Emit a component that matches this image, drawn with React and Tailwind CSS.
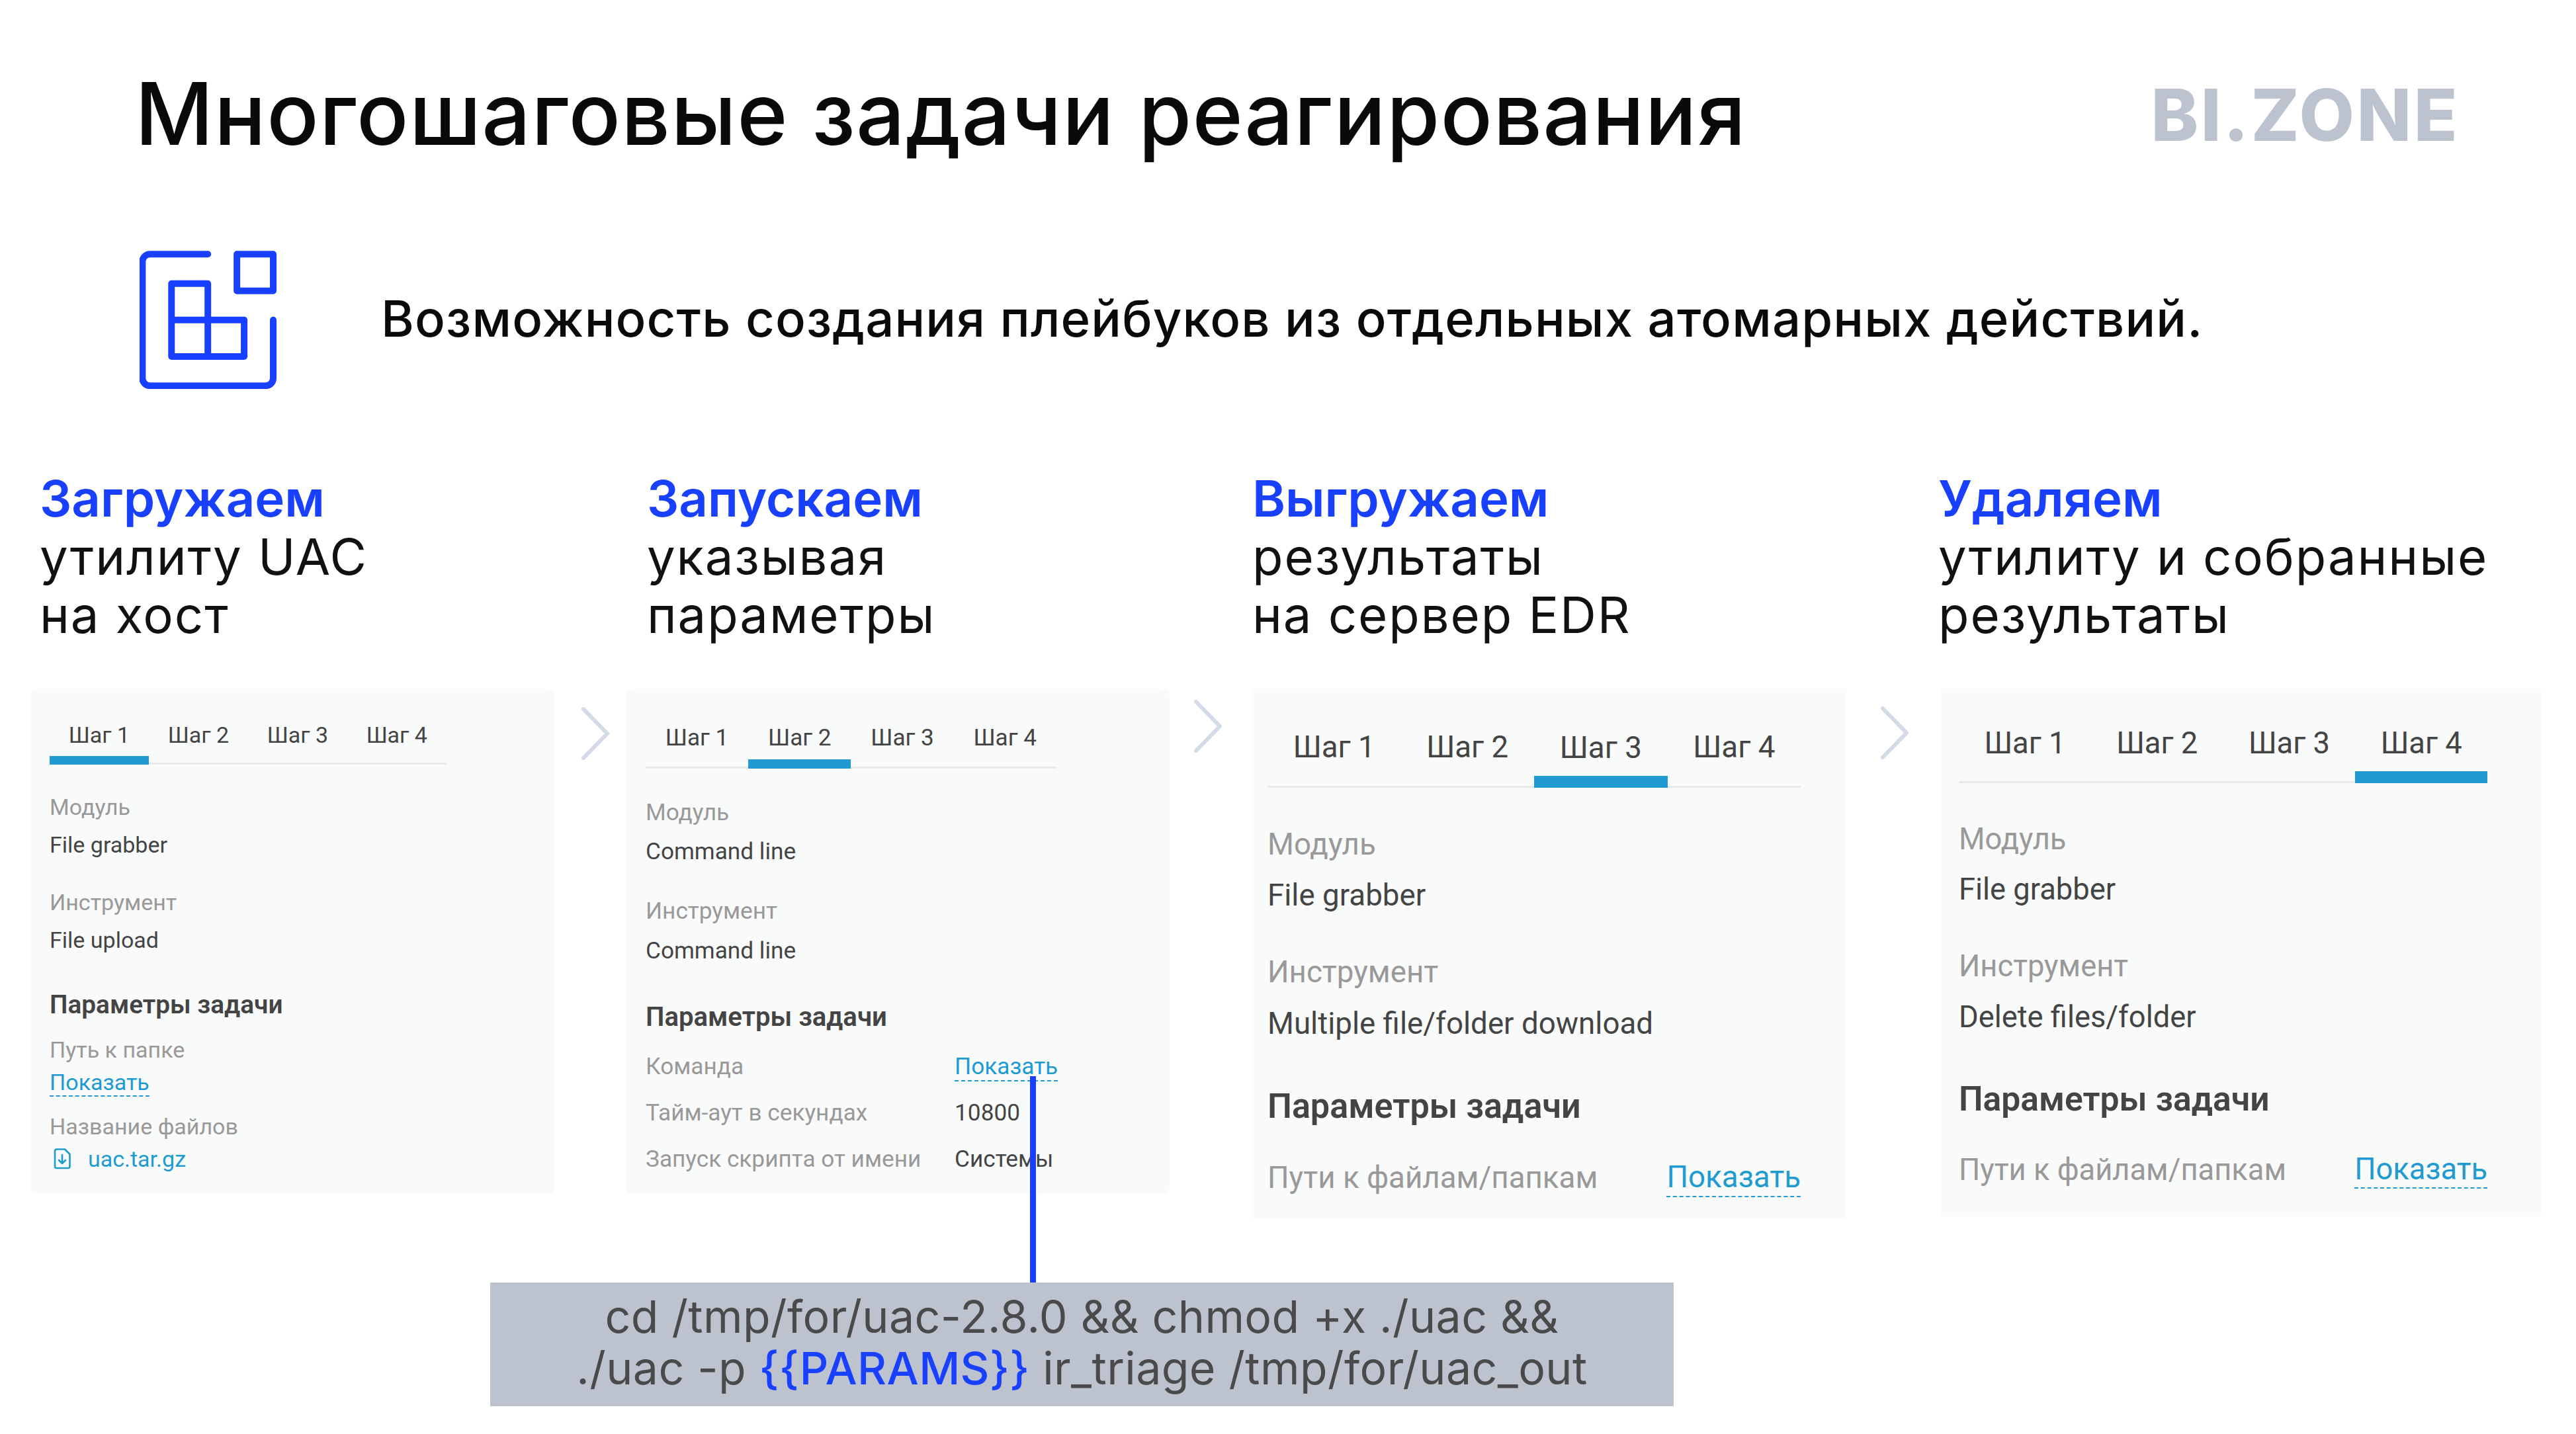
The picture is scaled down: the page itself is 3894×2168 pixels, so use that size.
import { Fragment } from 'react';

const tabs = ['Шаг 1', 'Шаг 2', 'Шаг 3', 'Шаг 4'];

function Chevron({ className }) {
  return (
    <svg viewBox="0 0 42 80" className={`w-[42px] h-[80px] shrink-0 ${className}`} fill="none" stroke="#d5dae8" strokeWidth="6" strokeLinecap="round" strokeLinejoin="round">
      <polyline points="3,3 39,40 3,77" />
    </svg>
  );
}

function BlocksIcon() {
  return (
    <svg viewBox="185 118 622 627" className="w-[207px] h-[209px] shrink-0" fill="none" stroke="#1a40ff" strokeWidth="30" strokeLinecap="round" strokeLinejoin="round">
      <path d="M495 133H232a34 34 0 0 0-34 34V697a34 34 0 0 0 34 34H758a34 34 0 0 0 34-34V432" />
      <rect x="627" y="133" width="165" height="167" />
      <path d="M330 267H495V432H660V598H330ZM330 432H495M495 432V598" />
    </svg>
  );
}

function FileIcon() {
  return (
    <svg viewBox="0 0 26 32" className="w-[26px] h-[32px] ml-[6px] mr-[26px] shrink-0" fill="none" stroke="#1f9bd1" strokeWidth="2.6" strokeLinecap="round" strokeLinejoin="round">
      <path d="M2 4a2.5 2.5 0 0 1 2.5-2.5H17L24.500 9V27.500A2.500 2.500 0 0 1 22 30H4.500A2.500 2.500 0 0 1 2 27.500Z" />
      <path d="M13 10V23M8 18l5 5 5-5" />
    </svg>
  );
}

function Tabs({ active }) {
  return (
    <div className="flex w-[17.64em] border-b-[3px] border-[#e6e8ea] h-[2.65em]">
      {tabs.map((t, i) => (
        <div key={t} className={`w-[4.41em] flex items-center justify-center text-[#444444] -mb-[3px] ${i === active ? 'border-b-[0.41em] border-[#1f9bd1]' : ''}`}>
          <span className={i === active ? 'mt-[0.41em]' : ''}>{t}</span>
        </div>
      ))}
    </div>
  );
}

function Label({ children, className = '' }) {
  return <div className={`leading-[1.5em] text-[#999999] ${className}`}>{children}</div>;
}

function Value({ children, className = '' }) {
  return <div className={`leading-[1.5em] text-[#444444] ${className}`}>{children}</div>;
}

function Show() {
  return <span className="inline-block leading-[1.2em] text-[#1f9bd1] border-b-2 border-dashed border-[#1f9bd1]">Показать</span>;
}

function Common({ active, tool, value, paramsGap = 'mt-[1.17em]' }) {
  return (
    <Fragment>
      <Tabs active={active} />
      <Label className="mt-[1.13em]">Модуль</Label>
      <Value className="mt-[0.18em]">{value}</Value>
      <Label className="mt-[1.06em]">Инструмент</Label>
      <Value className="mt-[0.2em]">{tool}</Value>
      <div className={`${paramsGap} leading-[1.34em] text-[#444444] text-[1.14em] font-semibold`}>Параметры задачи</div>
    </Fragment>
  );
}

function Heading({ accent, lines, className = '' }) {
  return (
    <div className={`h-[264px] mb-[68px] text-[76px] leading-[88px] tracking-[0.025em] text-[#111111] whitespace-nowrap font-['Inter',sans-serif] ${className}`}>
      <div className="text-[#1a40ff] font-semibold tracking-normal">{accent}</div>
      {lines.map((l) => (
        <div key={l}>{l}</div>
      ))}
    </div>
  );
}

export default function App() {
  return (
    <div className="relative w-[3894px] h-[2168px] overflow-hidden bg-white font-['Inter',sans-serif]">
      <header className="h-[348px] flex items-center justify-between pl-[204px] pr-[176px]">
        <h1 className="pb-[5px] text-[130px] font-medium tracking-[0.009em] text-[#0a0a0a] whitespace-nowrap">Многошаговые задачи реагирования</h1>
        <div className="text-[108px] font-extrabold tracking-[0.032em] text-[#bcc2ce] leading-none">BI.ZONE</div>
      </header>

      <div className="mt-[31px] h-[209px] flex items-center pl-[211px]">
        <BlocksIcon />
        <p className="ml-[158px] pb-[5px] text-[76px] font-medium tracking-[0.015em] text-[#0a0a0a] whitespace-nowrap">Возможность создания плейбуков из отдельных атомарных действий.</p>
      </div>

      <div className="mt-[121px] flex items-start pl-[46px] h-[1230px] font-['Roboto',sans-serif]">
        <div className="w-[793px] shrink-0">
          <Heading accent="Загружаем" lines={['утилиту UAC', 'на хост']} className="pl-[14px]" />
          <div className="h-[764px] rounded-[10px] bg-[#f9fafa] pl-[29px] pt-[25px] text-[34px]">
            <Common active={0} value="File grabber" tool="File upload" />
            <Label className="mt-[0.5em]">Путь к папке</Label>
            <div className="-mt-[0.06em] leading-[1.5em]"><Show /></div>
            <Label className="mt-[0.47em]">Название файлов</Label>
            <div className="-mt-[0.06em] leading-[1.5em] flex items-center text-[#1f9bd1]"><FileIcon />uac.tar.gz</div>
          </div>
        </div>

        <Chevron className="mt-[360px] ml-[40px] mr-[25px]" />

        <div className="w-[822px] shrink-0">
          <Heading accent="Запускаем" lines={['указывая', 'параметры']} className="pl-[32px]" />
          <div className="h-[764px] rounded-[10px] bg-[#f9fafa] pl-[30px] pt-[28px] text-[35.200px]">
            <Common active={1} value="Command line" tool="Command line" />
            <div className="mt-[0.6em] grid grid-cols-[13.27em_1fr] gap-y-[0.49em]">
              <Label>Команда</Label>
              <div className="leading-[1.5em]"><Show /></div>
              <Label>Тайм-аут в секундах</Label>
              <Value>10800</Value>
              <Label>Запуск скрипта от имени</Label>
              <Value>Системы</Value>
            </div>
          </div>
        </div>

        <Chevron className="mt-[349px] ml-[37px] mr-[45px]" />

        <div className="w-[899px] shrink-0">
          <Heading accent="Выгружаем" lines={['результаты', 'на сервер EDR']} className="pl-px" />
          <div className="h-[801px] bg-[#f9fafa] pl-[24px] pt-[29px] text-[45.700px]">
            <Common active={2} value="File grabber" tool="Multiple file/folder download" paramsGap="mt-[1.07em]" />
            <div className="mt-[0.85em] w-[17.64em] flex items-center justify-between">
              <Label>Пути к файлам/папкам</Label>
              <Show />
            </div>
          </div>
        </div>

        <Chevron className="mt-[359px] ml-[52px] mr-[49px]" />

        <div className="w-[907px] shrink-0">
          <Heading accent="Удаляем" lines={['утилиту и собранные', 'результаты']} className="-ml-[4px]" />
          <div className="h-[798px] bg-[#f9fafa] pl-[27px] pt-[23px] text-[45.300px]">
            <Common active={3} value="File grabber" tool="Delete files/folder" paramsGap="mt-[1.07em]" />
            <div className="mt-[0.85em] w-[17.64em] flex items-center justify-between">
              <Label>Пути к файлам/папкам</Label>
              <Show />
            </div>
          </div>
        </div>
      </div>

      <div className="ml-[741px] w-[1789px] h-[187px] pb-[8px] bg-[#bcc2ce] flex flex-col items-center justify-center text-[68px] leading-[78px] tracking-[0.006em] text-[#4a4a4a] whitespace-nowrap">
        <div>cd /tmp/for/uac-2.8.0 &amp;&amp; chmod +x ./uac &amp;&amp;</div>
        <div>./uac -p <span className="text-[#1a40ff] font-medium">{'{{PARAMS}}'}</span> ir_triage /tmp/for/uac_out</div>
      </div>

      <div className="absolute left-[1557px] top-[1627px] w-[9px] h-[312px] bg-[#1a40ff]" />
    </div>
  );
}
